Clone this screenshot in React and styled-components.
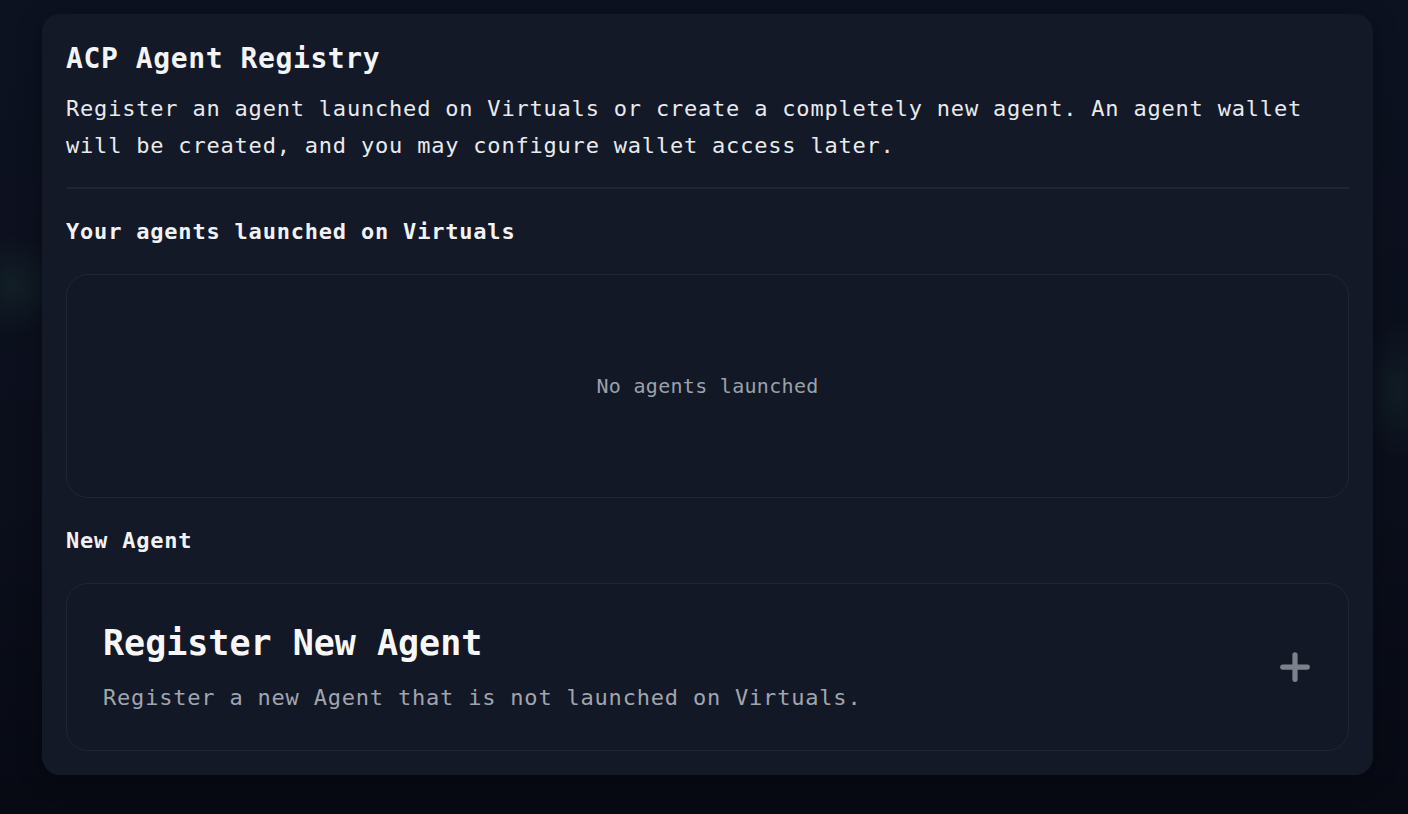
import styled, { createGlobalStyle } from 'styled-components';
import { Plus } from 'lucide-react';

const GlobalStyle = createGlobalStyle`
  html, body {
    margin: 0;
    padding: 0;
  }

  body {
    background: #090d18;
    font-family: 'DejaVu Sans Mono', 'Liberation Mono', monospace;
  }
`;

const Page = styled.div`
  min-height: 100vh;
  box-sizing: border-box;
  padding: 14px 35px 39px 42px;
  background:
    radial-gradient(circle at 14px 285px, rgba(40, 90, 70, 0.2) 0, rgba(40, 90, 70, 0) 50px),
    radial-gradient(ellipse 34px 70px at 1398px 390px, rgba(40, 90, 70, 0.18) 0, rgba(40, 90, 70, 0) 100%),
    linear-gradient(180deg, #0d1221 0%, #0b0f1c 60%, #070a13 100%);
`;

const Card = styled.section`
  border-radius: 18px;
  background: #131927;
  padding: 27px 24px 24px;
  box-shadow: 0 4px 24px rgba(0, 0, 0, 0.35);
`;

const Title = styled.h1`
  margin: 0;
  color: #f3f4f6;
  font-size: 28px;
  line-height: 36px;
  font-weight: 700;
  letter-spacing: 0.6px;
`;

const Description = styled.p`
  margin: 13px 0 0;
  color: #e8eaee;
  font-size: 22px;
  line-height: 37px;
  letter-spacing: 0.8px;
`;

const Divider = styled.hr`
  margin: 23px 0 28px;
  border: 0;
  height: 2px;
  background: #1f2533;
`;

const SectionLabel = styled.h2`
  margin: 0 0 27px;
  color: #f1f2f4;
  font-size: 22px;
  line-height: 30px;
  font-weight: 700;
  letter-spacing: 0.8px;
`;

const EmptyBox = styled.div`
  height: 224px;
  box-sizing: border-box;
  border: 1px solid #1f2634;
  border-radius: 22px;
  background: #121826;
  display: flex;
  align-items: center;
  justify-content: center;
  margin-bottom: 28px;
`;

const EmptyText = styled.span`
  color: #9aa1ab;
  font-size: 20px;
  letter-spacing: 0.3px;
`;

const RegisterBox = styled.button`
  width: 100%;
  height: 168px;
  box-sizing: border-box;
  border: 1px solid #1f2634;
  border-radius: 22px;
  background: #121826;
  padding: 0 32px 0 36px;
  display: flex;
  align-items: center;
  justify-content: space-between;
  text-align: left;
  font-family: inherit;
  cursor: pointer;
`;

const RegisterText = styled.div`
  display: flex;
  flex-direction: column;
  gap: 20px;
  padding-top: 1px;
`;

const RegisterTitle = styled.span`
  color: #f7f7f8;
  font-size: 35px;
  line-height: 40px;
  font-weight: 700;
`;

const RegisterSub = styled.span`
  color: #a0a5ae;
  font-size: 22px;
  line-height: 30px;
  letter-spacing: 0.8px;
`;

const PlusIcon = styled(Plus)`
  color: #7c818b;
  flex-shrink: 0;
`;

export default function App() {
  return (
    <>
      <GlobalStyle />
      <Page>
        <Card>
          <Title>ACP Agent Registry</Title>
          <Description>
            Register an agent launched on Virtuals or create a completely new
            agent. An agent wallet will be created, and you may configure
            wallet access later.
          </Description>
          <Divider />
          <SectionLabel>Your agents launched on Virtuals</SectionLabel>
          <EmptyBox>
            <EmptyText>No agents launched</EmptyText>
          </EmptyBox>
          <SectionLabel>New Agent</SectionLabel>
          <RegisterBox type='button'>
            <RegisterText>
              <RegisterTitle>Register New Agent</RegisterTitle>
              <RegisterSub>
                Register a new Agent that is not launched on Virtuals.
              </RegisterSub>
            </RegisterText>
            <PlusIcon size={42} strokeWidth={3} />
          </RegisterBox>
        </Card>
      </Page>
    </>
  );
}
